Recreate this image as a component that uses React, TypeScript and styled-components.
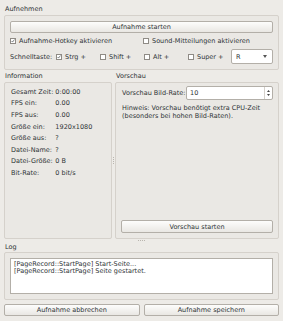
import { Fragment } from "react";
import styled, { createGlobalStyle } from "styled-components";

const GlobalStyle = createGlobalStyle`
  html, body {
    margin: 0;
    padding: 0;
    background: #edebe7;
  }
  body {
    font-family: "DejaVu Sans", "Liberation Sans", sans-serif;
    font-size: 6.5px;
    color: #2e3436;
  }
`;

const Page = styled.div`
  box-sizing: border-box;
  display: flex;
  flex-direction: column;
  height: 321px;
  padding: 3px 4px 5px;
`;

const SectionLabel = styled.div<{ $h?: number }>`
  display: flex;
  align-items: center;
  height: ${(p) => p.$h ?? 12}px;
  padding-left: 1px;
`;

const Group = styled.div<{ $grow?: boolean; $top?: number }>`
  box-sizing: border-box;
  border: 1px solid #d5d1cb;
  border-radius: 2px;
  background: #eae8e4;
  padding: 5px;
  padding-top: ${(p) => p.$top ?? 5}px;
  display: flex;
  flex-direction: column;
  ${(p) => (p.$grow ? "flex: 1;" : "")}
`;

const Button = styled.button<{ $h?: number }>`
  box-sizing: border-box;
  height: ${(p) => p.$h ?? 12}px;
  width: 100%;
  padding: 0;
  border: 1px solid #b3afa8;
  border-radius: 2px;
  background: linear-gradient(#fdfdfc, #e9e7e3);
  font: inherit;
  color: #2e3436;
  display: flex;
  align-items: center;
  justify-content: center;
`;

const Row = styled.div<{ $h: number }>`
  display: flex;
  align-items: center;
  height: ${(p) => p.$h}px;
  margin-top: 2px;
`;

const CheckItem = styled.label<{ $w?: number }>`
  display: flex;
  align-items: center;
  gap: 3px;
  white-space: nowrap;
  ${(p) => (p.$w ? `width: ${p.$w}px;` : "")}
  flex-shrink: 0;
`;

const Box = styled.span`
  box-sizing: border-box;
  width: 6px;
  height: 6px;
  border: 1px solid #8f8b85;
  background: #fff;
  display: inline-flex;
  align-items: center;
  justify-content: center;
`;

const Combo = styled.div`
  box-sizing: border-box;
  margin-left: auto;
  width: 42px;
  height: 15px;
  border: 1px solid #b3afa8;
  border-radius: 2px;
  background: #fff;
  display: flex;
  align-items: center;
  justify-content: space-between;
  padding: 0 5px 0 4px;
`;

const Middle = styled.div`
  flex: 1;
  display: flex;
  min-height: 0;
`;

const Column = styled.div<{ $w: number }>`
  width: ${(p) => p.$w}px;
  display: flex;
  flex-direction: column;
`;

const VHandle = styled.div`
  width: 3px;
  display: flex;
  align-items: center;
  justify-content: center;
  padding-top: 12px;

  &::after {
    content: "";
    width: 1px;
    height: 8px;
    background: repeating-linear-gradient(#b9b5ae 0 1px, transparent 1px 2px);
  }
`;

const HHandle = styled.div`
  height: 3px;
  display: flex;
  align-items: center;
  justify-content: center;

  &::after {
    content: "";
    width: 7px;
    height: 1px;
    background: repeating-linear-gradient(90deg, #b9b5ae 0 1px, transparent 1px 2px);
  }
`;

const InfoGrid = styled.div`
  display: grid;
  grid-template-columns: max-content 1fr;
  column-gap: 2px;
  grid-auto-rows: 11.6px;
  align-items: center;
  white-space: nowrap;
  padding-left: 1px;
`;

const SpinRow = styled.div`
  display: flex;
  align-items: center;
  justify-content: space-between;
  padding-left: 1px;
`;

const Spin = styled.div`
  box-sizing: border-box;
  width: 87px;
  height: 14px;
  border: 1px solid #b3afa8;
  border-radius: 2px;
  background: #fff;
  display: flex;
  align-items: center;
  padding-left: 3px;
`;

const SpinArrows = styled.div`
  margin-left: auto;
  width: 7px;
  height: 100%;
  border-left: 1px solid #d5d1cb;
  display: flex;
  align-items: center;
  justify-content: center;
`;

const Hint = styled.div`
  line-height: 8px;
  margin-top: 4px;
  padding-left: 1px;
`;

const Spacer = styled.div`
  flex: 1;
`;

const LogArea = styled.div`
  box-sizing: border-box;
  height: 36px;
  border: 1px solid #b3afa8;
  background: #fff;
  padding: 2px 3px;
  line-height: 6.5px;
`;

const Buttons = styled.div`
  display: flex;
  gap: 4px;
  margin-top: 4px;
`;

const Check = ({ checked }: { checked?: boolean }) => (
  <Box>
    {checked && (
      <svg width="6" height="6" viewBox="0 0 6 6">
        <path d="M0.8 3 L2.3 4.6 L5.2 0.8" fill="none" stroke="#2e3436" strokeWidth="0.9" />
      </svg>
    )}
  </Box>
);

const info: [string, string][] = [
  ["Gesamt Zeit:", "0:00:00"],
  ["FPS ein:", "0.00"],
  ["FPS aus:", "0.00"],
  ["Größe ein:", "1920x1080"],
  ["Größe aus:", "?"],
  ["Datei-Name:", "?"],
  ["Datei-Größe:", "0 B"],
  ["Bit-Rate:", "0 bit/s"],
];

export default function App() {
  return (
    <>
      <GlobalStyle />
      <Page>
        <SectionLabel>Aufnehmen</SectionLabel>
        <Group>
          <Button>Aufnahme starten</Button>
          <Row $h={12}>
            <CheckItem $w={133}>
              <Check checked />
              Aufnahme-Hotkey aktivieren
            </CheckItem>
            <CheckItem>
              <Check />
              Sound-Mitteilungen aktivieren
            </CheckItem>
          </Row>
          <Row $h={15}>
            <CheckItem $w={46}>Schnelltaste:</CheckItem>
            <CheckItem $w={44}>
              <Check checked />
              Strg +
            </CheckItem>
            <CheckItem $w={44}>
              <Check />
              Shift +
            </CheckItem>
            <CheckItem $w={44}>
              <Check />
              Alt +
            </CheckItem>
            <CheckItem>
              <Check />
              Super +
            </CheckItem>
            <Combo>
              R
              <svg width="4" height="3" viewBox="0 0 4 3">
                <path d="M0 0 H4 L2 3 Z" fill="#555" />
              </svg>
            </Combo>
          </Row>
        </Group>
        <Middle>
          <Column $w={108}>
            <SectionLabel>Information</SectionLabel>
            <Group $grow $top={3}>
              <InfoGrid>
                {info.map(([k, v]) => (
                  <Fragment key={k}>
                    <span>{k}</span>
                    <span>{v}</span>
                  </Fragment>
                ))}
              </InfoGrid>
            </Group>
          </Column>
          <VHandle />
          <Column $w={164}>
            <SectionLabel>Vorschau</SectionLabel>
            <Group $grow $top={3}>
              <SpinRow>
                Vorschau Bild-Rate:
                <Spin>
                  10
                  <SpinArrows>
                    <svg width="3" height="8" viewBox="0 0 3 8">
                      <path d="M0 3 L1.5 1 L3 3 Z M0 5 L1.5 7 L3 5 Z" fill="#444" />
                    </svg>
                  </SpinArrows>
                </Spin>
              </SpinRow>
              <Hint>
                Hinweis: Vorschau benötigt extra CPU-Zeit
                <br />
                (besonders bei hohen Bild-Raten).
              </Hint>
              <Spacer />
              <Button $h={13}>Vorschau starten</Button>
            </Group>
          </Column>
        </Middle>
        <HHandle />
        <SectionLabel $h={10}>Log</SectionLabel>
        <Group>
          <LogArea>
            [PageRecord::StartPage] Start-Seite...
            <br />
            [PageRecord::StartPage] Seite gestartet.
          </LogArea>
        </Group>
        <Buttons>
          <Button>Aufnahme abbrechen</Button>
          <Button>Aufnahme speichern</Button>
        </Buttons>
      </Page>
    </>
  );
}
